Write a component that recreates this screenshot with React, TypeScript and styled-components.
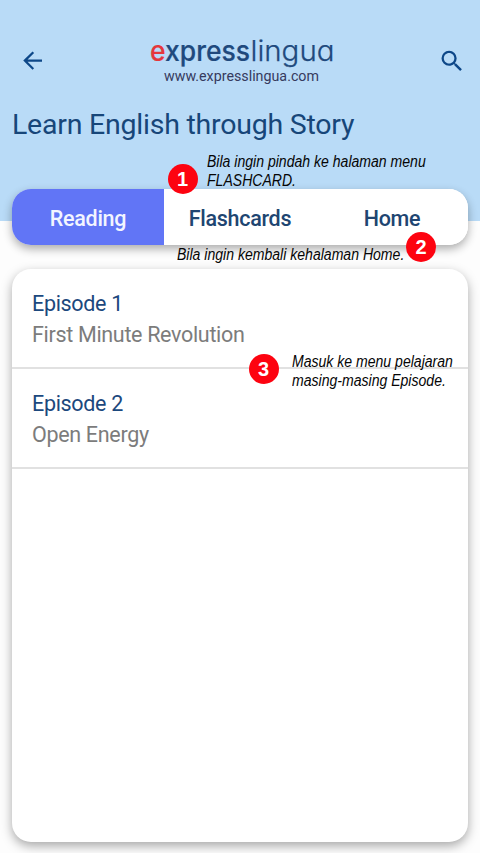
import React from "react";
import styled, { createGlobalStyle } from "styled-components";

const Global = createGlobalStyle`
  * { box-sizing: border-box; }
  body { margin: 0; background: #fdfdfd; font-family: Roboto, "Liberation Sans", sans-serif; }
`;

const Screen = styled.div`
  position: relative;
  width: 480px;
  height: 853px;
  overflow: hidden;
  background: linear-gradient(#b9dbf7 0 221.5px, #fdfdfd 221.5px);
  display: flex;
  flex-direction: column;
`;

const TopBar = styled.header`
  display: grid;
  grid-template-columns: 30px 190px 28px;
  justify-content: space-between;
  align-items: start;
  height: 104px;
  padding: 34px 14px 0 18px;
`;

const IconButton = styled.button`
  display: flex;
  margin: 11px 0 0;
  padding: 0;
  border: 0;
  background: none;
  color: #0d4788;
`;

const Brand = styled.svg`
  display: block;
  width: 190px;
  height: 54px;
  margin-left: -2px;
`;

const Title = styled.h1`
  margin: 0 0 0 12px;
  height: 85px;
  color: #174679;
  font-size: 28.5px;
  letter-spacing: -0.23px;
  line-height: 42px;
  font-weight: 400;
  white-space: nowrap;
`;

const Tabs = styled.nav`
  display: grid;
  grid-template-columns: repeat(3, 1fr);
  flex: none;
  height: 56px;
  margin: 0 12px;
  overflow: hidden;
  border-radius: 19px;
  background: #fff;
  box-shadow: 0 4px 10px rgba(0, 0, 0, 0.32);
`;

const Tab = styled.button<{ $active?: boolean }>`
  border: 0;
  padding: 2px 0 0;
  font: 500 21.5px Roboto, sans-serif;
  letter-spacing: -0.3px;
  color: ${(p) => (p.$active ? "#f3f5ff" : "#204571")};
  background: ${(p) => (p.$active ? "#6175f6" : "#fff")};
`;

const Episodes = styled.main`
  flex: none;
  height: 573px;
  margin: 23.5px 12px 0;
  border-radius: 19px;
  background: #fff;
  box-shadow: 0 4px 11px rgba(0, 0, 0, 0.34);
`;

const Episode = styled.article`
  height: 100px;
  padding: 19px 20px 0;
  border-bottom: 2px solid #e1e1e1;
`;

const EpisodeName = styled.h2`
  margin: 0;
  font-size: 21.5px;
  letter-spacing: -0.32px;
  font-weight: 400;
  line-height: 31px;
  color: #1c487d;
`;

const EpisodeTopic = styled.p`
  margin: 0;
  font-size: 21.5px;
  letter-spacing: -0.32px;
  line-height: 31px;
  color: #7c7c7c;
`;

const Badge = styled.span<{ $x: number; $y: number }>`
  position: absolute;
  left: ${(p) => p.$x}px;
  top: ${(p) => p.$y}px;
  width: 30px;
  height: 30px;
  border-radius: 50%;
  background: #fd0310;
  color: #fff;
  font: bold 20px/31px "Liberation Sans", Arial, sans-serif;
  text-align: center;
`;

const Note = styled.p<{ $x: number; $y: number }>`
  position: absolute;
  left: ${(p) => p.$x}px;
  top: ${(p) => p.$y}px;
  margin: 0;
  color: #050505;
  font: italic 17.4px/19px "Liberation Sans", Arial, sans-serif;
  white-space: nowrap;
  transform: scaleX(0.808);
  transform-origin: 0 0;
`;

const episodes = [
  { name: "Episode 1", topic: "First Minute Revolution" },
  { name: "Episode 2", topic: "Open Energy" },
];

export default function App() {
  return (
    <Screen>
      <Global />
      <TopBar>
        <IconButton aria-label="Back">
          <svg width="30" height="30" viewBox="0 0 30 30" fill="none" stroke="currentColor" strokeWidth="2.2">
            <path d="M24 15.6H7M15.3 7.2 6.8 15.6l8.5 8.4" />
          </svg>
        </IconButton>
        <Brand viewBox="0 0 190 54" aria-label="expresslingua">
          <g fontFamily="Inter, Lato, sans-serif" fontSize="28" style={{ fontFeatureSettings: '"cv11"' }}>
            <text x="4" y="26.8" fontWeight="500" textLength="100" lengthAdjust="spacingAndGlyphs" fill="#20497d" stroke="#20497d" strokeWidth="0.2">
              <tspan fill="#e5373b" stroke="#e5373b">e</tspan>xpress
            </text>
            <text x="104.5" y="26.8" fontWeight="300" textLength="84" lengthAdjust="spacingAndGlyphs" fill="#20497d" stroke="#20497d" strokeWidth="0.25">lingua</text>
          </g>
          <text x="18" y="47" fontFamily="Roboto, sans-serif" fontSize="14" textLength="155" lengthAdjust="spacingAndGlyphs" fill="#363a5e">www.expresslingua.com</text>
        </Brand>
        <IconButton aria-label="Search">
          <svg width="28" height="30" viewBox="0 -1 24 24" fill="currentColor">
            <path d="M15.5 14h-.79l-.28-.27A6.47 6.47 0 0 0 16 9.5 6.5 6.5 0 1 0 9.5 16c1.61 0 3.09-.59 4.23-1.57l.27.28v.79l5 4.99L20.49 19zm-6 0C7.01 14 5 11.99 5 9.5S7.01 5 9.5 5 14 7.01 14 9.5 11.99 14 9.5 14z" />
          </svg>
        </IconButton>
      </TopBar>
      <Title>Learn English through Story</Title>
      <Tabs>
        <Tab $active>Reading</Tab>
        <Tab>Flashcards</Tab>
        <Tab>Home</Tab>
      </Tabs>
      <Episodes>
        {episodes.map((e) => (
          <Episode key={e.name}>
            <EpisodeName>{e.name}</EpisodeName>
            <EpisodeTopic>{e.topic}</EpisodeTopic>
          </Episode>
        ))}
      </Episodes>
      <Badge $x={167.5} $y={164}>1</Badge>
      <Note $x={206.5} $y={152}>Bila ingin pindah ke halaman menu<br />FLASHCARD.</Note>
      <Badge $x={406} $y={232}>2</Badge>
      <Note $x={177} $y={245}>Bila ingin kembali kehalaman Home.</Note>
      <Badge $x={248.5} $y={354}>3</Badge>
      <Note $x={292} $y={352}>Masuk ke menu pelajaran<br />masing-masing Episode.</Note>
    </Screen>
  );
}
